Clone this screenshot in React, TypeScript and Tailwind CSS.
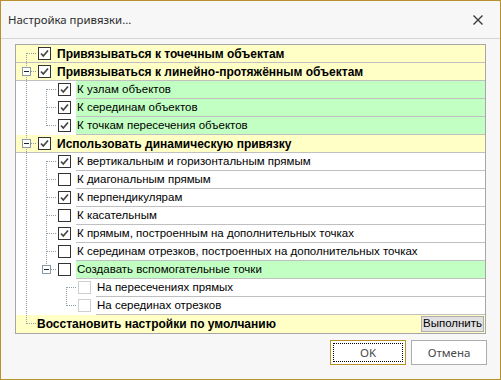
import clsx from 'clsx';

type Guide = 'full' | 'top' | 'bottom' | 'none';

interface RowData {
  level: number;
  label: string;
  guides: Guide[];
  checked?: boolean;
  noCheck?: boolean;
  disabled?: boolean;
  expander?: boolean;
  tone?: 'yellow' | 'green' | 'white';
  action?: string;
}

const rows: RowData[] = [
  { level: 0, label: 'Привязываться к точечным объектам', guides: ['bottom'], checked: true, tone: 'yellow' },
  { level: 0, label: 'Привязываться к линейно-протяжённым объектам', guides: ['full'], checked: true, tone: 'yellow', expander: true },
  { level: 1, label: 'К узлам объектов', guides: ['full', 'bottom'], checked: true, tone: 'green' },
  { level: 1, label: 'К серединам объектов', guides: ['full', 'full'], checked: true, tone: 'green' },
  { level: 1, label: 'К точкам пересечения объектов', guides: ['full', 'top'], checked: true, tone: 'green' },
  { level: 0, label: 'Использовать динамическую привязку', guides: ['full'], checked: true, tone: 'yellow', expander: true },
  { level: 1, label: 'К вертикальным и горизонтальным прямым', guides: ['full', 'bottom'], checked: true },
  { level: 1, label: 'К диагональным прямым', guides: ['full', 'full'] },
  { level: 1, label: 'К перпендикулярам', guides: ['full', 'full'], checked: true },
  { level: 1, label: 'К касательным', guides: ['full', 'full'] },
  { level: 1, label: 'К прямым, построенным на дополнительных точках', guides: ['full', 'full'], checked: true },
  { level: 1, label: 'К серединам отрезков, построенных на дополнительных точках', guides: ['full', 'full'] },
  { level: 1, label: 'Создавать вспомогательные точки', guides: ['full', 'top'], tone: 'green', expander: true },
  { level: 2, label: 'На пересечениях прямых', guides: ['full', 'none', 'bottom'], disabled: true },
  { level: 2, label: 'На серединах отрезков', guides: ['full', 'none', 'top'], disabled: true },
  { level: 0, label: 'Восстановить настройки по умолчанию', guides: ['top'], noCheck: true, tone: 'yellow', action: 'Выполнить' },
];

const DOT = '#8fa0ad';

// one 20px column of tree connectors
function GuideCol({ kind, last, expander }: { kind: Guide; last: boolean; expander?: boolean }) {
  return (
    <svg width="20" height="18" className="shrink-0" shapeRendering="crispEdges">
      {kind === 'full' && <line x1="10.5" y1="0" x2="10.5" y2="18" stroke={DOT} strokeDasharray="1 1" />}
      {kind === 'top' && <line x1="10.5" y1="0" x2="10.5" y2="9" stroke={DOT} strokeDasharray="1 1" />}
      {kind === 'bottom' && <line x1="10.5" y1="8" x2="10.5" y2="18" stroke={DOT} strokeDasharray="1 1" />}
      {last && <line x1="11" y1="8.5" x2="21" y2="8.5" stroke={DOT} strokeDasharray="1 1" />}
      {expander && (
        <g>
          <rect x="6.5" y="4.5" width="8" height="8" fill="#fff" stroke="#8a9aa8" />
          <line x1="8" y1="8.5" x2="13" y2="8.5" stroke="#222" />
        </g>
      )}
    </svg>
  );
}

function CheckBox({ checked, disabled }: { checked?: boolean; disabled?: boolean }) {
  return (
    <svg width="13" height="13" className="shrink-0" shapeRendering="crispEdges">
      <rect x="0.5" y="0.5" width="12" height="12" fill="#fff" stroke={disabled ? '#cfcfcf' : '#333'} />
      {checked && (
        <polyline
          points="3,6.5 5.3,9 10,3.5"
          fill="none"
          stroke="#454545"
          strokeWidth="1.7"
          shapeRendering="geometricPrecision"
        />
      )}
    </svg>
  );
}

function TreeRow({ r, isLast }: { r: RowData; isLast: boolean }) {
  const bg = r.tone === 'yellow' ? 'bg-[#ffffc6]' : r.tone === 'green' ? 'bg-[#c2ffc2]' : 'bg-white';
  const guides = r.guides.map((g, i) => (
    <GuideCol key={i} kind={g} last={i === r.guides.length - 1} expander={r.expander && i === r.guides.length - 1} />
  ));

  if (r.level === 0) {
    return (
      <div className={clsx('flex h-[18px] items-center', bg, !isLast && 'border-b border-[#c0c0c0]')}>
        <div className="flex self-start">{guides}</div>
        {r.noCheck ? (
          <div className="w-[1px]" />
        ) : (
          <div className="ml-[2px] mr-[6px] flex">
            <CheckBox checked={r.checked} />
          </div>
        )}
        <span className="flex-1 text-[12px] font-bold leading-none text-black">{r.label}</span>
        {r.action && (
          <button className="mr-px h-[16px] w-[63px] border border-[#adadad] bg-[#e1e1e1] text-[11.5px] leading-none text-black">
            {r.action}
          </button>
        )}
      </div>
    );
  }

  return (
    <div className="flex h-[18px]">
      {guides}
      <div className="ml-[2px] mr-[5px] flex items-start pt-[2px]">
        <CheckBox checked={r.checked} disabled={r.disabled} />
      </div>
      <div className={clsx('flex flex-1 items-center border-b border-[#c0c0c0] pl-px', bg)}>
        <span className="text-[11.5px] leading-none text-black">{r.label}</span>
      </div>
    </div>
  );
}

export default function App() {
  return (
    <div className="flex h-[380px] w-[501px] flex-col border border-[#b8912c] bg-[#f7f7f7] font-['Liberation_Sans',sans-serif]">
      <div className="flex h-[38px] shrink-0 items-center justify-between border-b border-[#d4d4d4] pl-[7px] pr-[17px]">
        <span className="font-['Noto_Sans',sans-serif] text-[11.4px] text-[#2b2b2b]">Настройка привязки...</span>
        <svg width="10" height="10" viewBox="0 0 10 10">
          <path d="M0.5 0.5 L9.5 9.5 M9.5 0.5 L0.5 9.5" stroke="#3a3a3a" strokeWidth="1.4" />
        </svg>
      </div>

      <div className="ml-[14px] mt-[5px] w-[471px] border border-[#a6a6a6] bg-white">
        {rows.map((r, i) => (
          <TreeRow key={i} r={r} isLast={i === rows.length - 1} />
        ))}
      </div>

      <div className="mr-[13px] mt-[6px] flex justify-end gap-[5px]">
        <button className="h-[25px] w-[76px] border border-[#b8912c] bg-white p-[2px] font-['Noto_Sans',sans-serif] text-[11.5px] text-[#4a4a4a]">
          <div className="flex h-full w-full items-center justify-center border border-dotted border-black">OK</div>
        </button>
        <button className="h-[25px] w-[76px] border border-[#adadad] bg-white font-['Noto_Sans',sans-serif] text-[11.5px] text-[#4a4a4a]">
          Отмена
        </button>
      </div>
    </div>
  );
}
